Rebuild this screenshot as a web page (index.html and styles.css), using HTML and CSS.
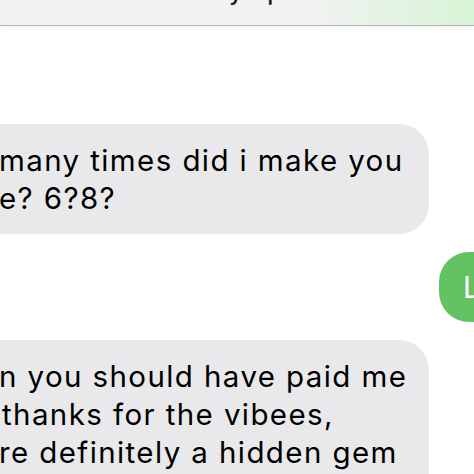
FILE: index.html
```html
<!DOCTYPE html>
<html>
<head>
    <meta charset="UTF-8">
    <meta name="viewport" content="width=device-width, initial-scale=1.0">
    <title>Messages</title>
    <link rel="stylesheet" href="styles.css">
</head>
<body>
    <div class="header">
        <div class="headerTitle">Today 6pm</div>
    </div>

    <div class="thread">
        <div class="row received">
            <div class="bubble gray">
                <span class="line">many times did i make you</span>
                <span class="line">e? 6?8?</span>
            </div>
        </div>

        <div class="row sent">
            <div class="bubble green">
                <span class="line">Lol</span>
            </div>
        </div>

        <div class="row received">
            <div class="bubble gray">
                <span class="line">n you should have paid me</span>
                <span class="line indent">thanks for the vibees,</span>
                <span class="line">re definitely a hidden gem</span>
                <span class="line">fr</span>
            </div>
        </div>
    </div>
</body>
</html>
```

FILE: styles.css
```css
html, body {
    margin: 0;
    padding: 0;
    width: 474px;
    height: 474px;
    overflow: hidden;
    background: #ffffff;
    font-family: Inter, "Liberation Sans", sans-serif;
    color: #111111;
}

.header {
    height: 25px;
    overflow: hidden;
    background: linear-gradient(to right, #f2f2f2 0%, #f1f2f1 66%, #d7f4d6 100%);
    border-bottom: 1px solid #b3b3b3;
    box-shadow: 0 2px 3px rgba(0, 0, 0, 0.04);
    text-align: center;
}

.headerTitle {
    margin-top: -20px;
    font-size: 24px;
    line-height: 24px;
    font-weight: 500;
    letter-spacing: 1px;
    color: #1a1a1a;
}

.thread {
    display: flex;
    flex-direction: column;
    gap: 18px;
    padding-top: 98px;
}

.row {
    display: flex;
}

.row.sent {
    padding-left: 439px;
}

.bubble {
    box-sizing: border-box;
    border-radius: 30px;
    font-size: 29.5px;
    line-height: 38px;
    letter-spacing: 1.4px;
    white-space: nowrap;
}

.bubble .line {
    display: block;
}

.bubble .indent {
    padding-left: 3px;
}

.gray {
    width: 469px;
    margin-left: -40px;
    padding: 17px 20px 17px 39px;
    background: #e9e9eb;
    color: #000000;
}

.green {
    padding: 16px 24px;
    background: #63c363;
    color: #ffffff;
}
```
